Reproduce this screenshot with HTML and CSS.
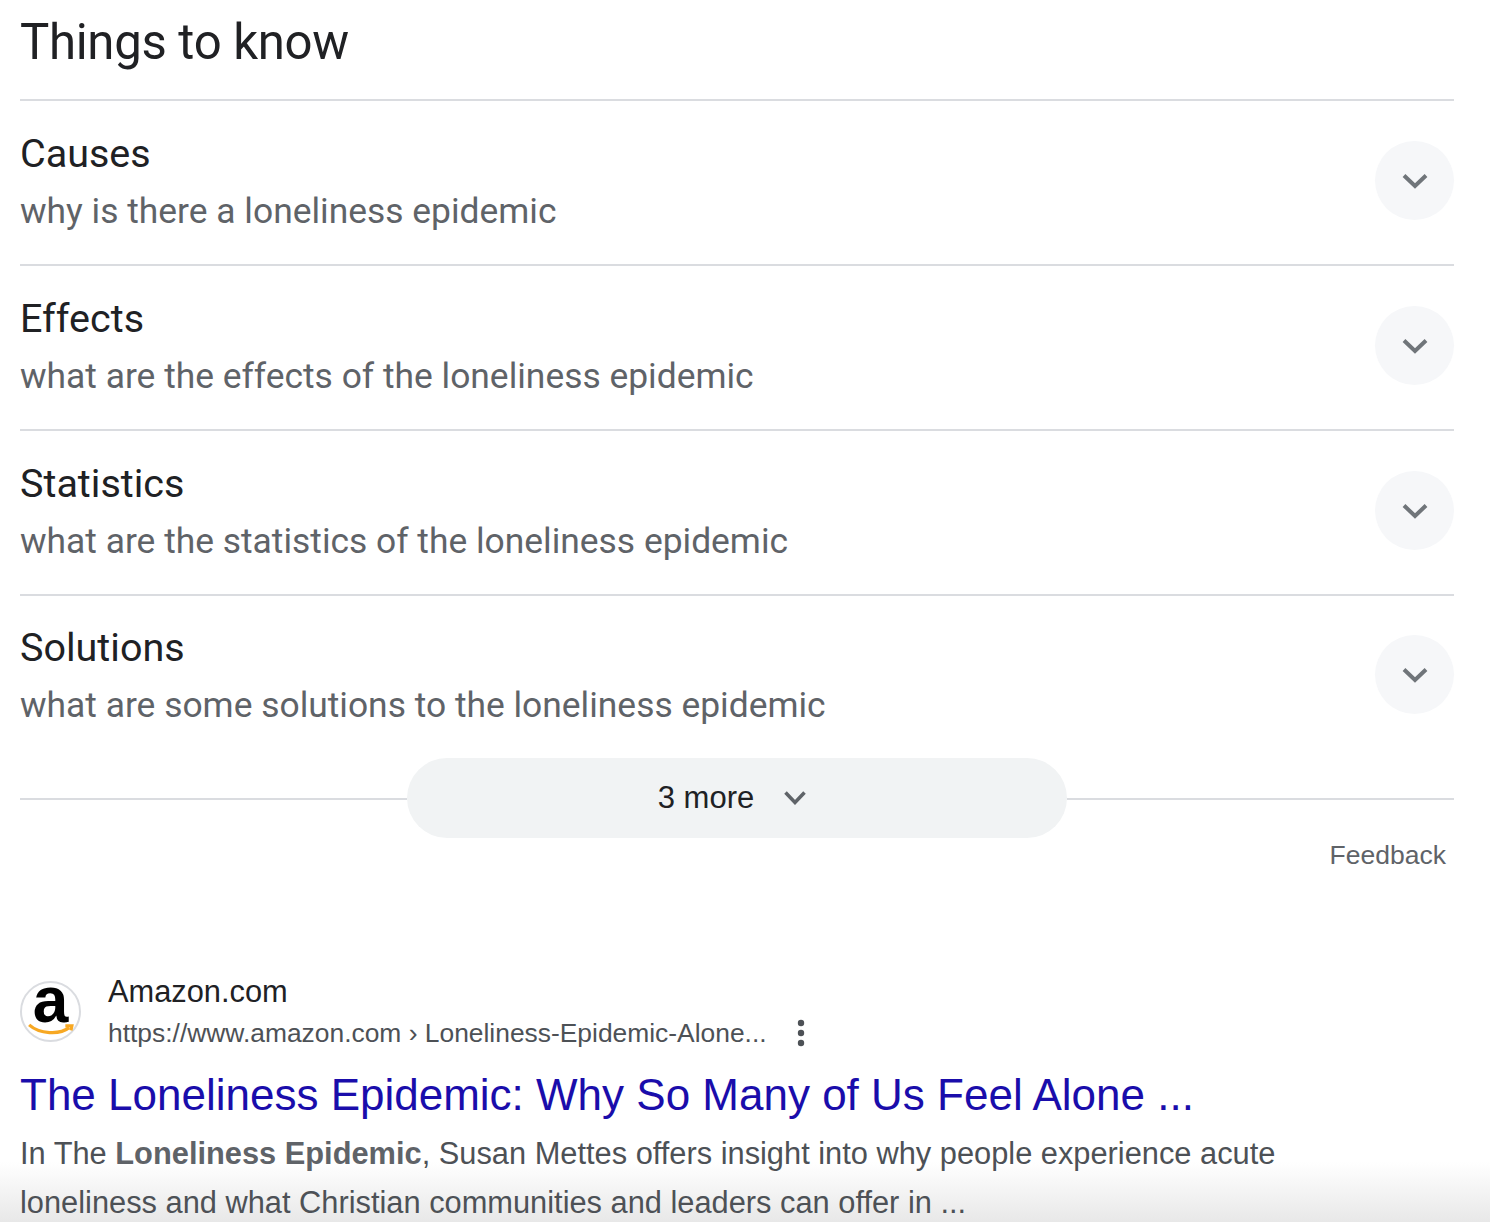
FILE: index.html
```html
<!DOCTYPE html>
<html lang="en">
<head>
<meta charset="utf-8">
<title>Things to know</title>
<link rel="stylesheet" href="styles.css">
</head>
<body>
<div class="fade"></div>
<main class="page">
  <h2 class="heading">Things to know</h2>
  <section class="list">
    <div class="row">
      <div class="row-text"><div class="row-title">Causes</div><div class="row-sub">why is there a loneliness epidemic</div></div>
      <button class="circle"><svg class="chev" viewBox="0 0 26 16"><path d="M2 2.500 13 13 24 2.500"/></svg></button>
    </div>
    <div class="row">
      <div class="row-text"><div class="row-title">Effects</div><div class="row-sub">what are the effects of the loneliness epidemic</div></div>
      <button class="circle"><svg class="chev" viewBox="0 0 26 16"><path d="M2 2.500 13 13 24 2.500"/></svg></button>
    </div>
    <div class="row">
      <div class="row-text"><div class="row-title">Statistics</div><div class="row-sub">what are the statistics of the loneliness epidemic</div></div>
      <button class="circle"><svg class="chev" viewBox="0 0 26 16"><path d="M2 2.500 13 13 24 2.500"/></svg></button>
    </div>
    <div class="row">
      <div class="row-text"><div class="row-title">Solutions</div><div class="row-sub">what are some solutions to the loneliness epidemic</div></div>
      <button class="circle"><svg class="chev" viewBox="0 0 26 16"><path d="M2 2.500 13 13 24 2.500"/></svg></button>
    </div>
  </section>
  <div class="more">
    <span class="more-line"></span>
    <button class="more-pill"><span>3 more</span><svg class="more-chev" viewBox="0 0 22 14"><path d="M1.500 1.500 11 11.500 20.500 1.500"/></svg></button>
    <span class="more-line"></span>
  </div>
  <div class="feedback">Feedback</div>
  <article class="result">
    <div class="source">
      <div class="favicon">
        <span class="favicon-a">a</span>
        <svg class="favicon-smile" viewBox="0 0 48 14"><path d="M1 2C12 12 34 13 44 5"/><path class="tip" d="M40 3 47 3 46 8"/></svg>
      </div>
      <div class="source-text">
        <div class="site">Amazon.com</div>
        <div class="url-row"><span class="url">https://www.amazon.com › Loneliness-Epidemic-Alone...</span>
          <svg class="dots" viewBox="0 0 10 28"><circle cx="5" cy="4" r="3.200"/><circle cx="5" cy="14" r="3.200"/><circle cx="5" cy="24" r="3.200"/></svg>
        </div>
      </div>
    </div>
    <h3 class="title">The Loneliness Epidemic: Why So Many of Us Feel Alone ...</h3>
    <p class="snippet">In The <b>Loneliness Epidemic</b>, Susan Mettes offers insight into why people experience acute loneliness and what Christian communities and leaders can offer in ...</p>
  </article>
</main>
</body>
</html>
```
FILE: styles.css
```css
* { box-sizing: border-box; }
html, body { margin: 0; height: 1222px; overflow: hidden; background: #fff; }
body { position: relative; font-family: "Liberation Sans", Arial, sans-serif; color: #202124; }
.page { position: relative; padding: 0 36px 0 20px; }
.heading { margin: 0; height: 99px; padding-top: 11px; font: 400 49.1px/62px Roboto, sans-serif; color: #202124; letter-spacing: -0.3px; }
.row { height: 165px; border-top: 2px solid #dadce0; display: flex; justify-content: space-between; align-items: center; padding-bottom: 4px; }
.row:last-child { height: 164px; padding-bottom: 5px; }
.row-text { display: flex; flex-direction: column; margin-top: 3px; }
.row-title { font: 400 39.5px/52px Roboto, sans-serif; color: #202124; }
.row-sub { font: 400 35.4px/50px Roboto, sans-serif; color: #5f6368; margin-top: 6px; }
.circle { width: 79px; height: 79px; border: 0; border-radius: 50%; background: #f6f7f9; display: flex; align-items: center; justify-content: center; padding: 0; }
.chev { width: 26px; height: 16px; fill: none; stroke: #70757a; stroke-width: 4; }
.more { display: flex; align-items: center; height: 80px; }
.more-line { flex: 1; height: 2px; margin-top: 2px; background: #dadce0; }
.more-pill { width: 660px; height: 80px; border: 0; border-radius: 40px; background: #f1f3f4; display: flex; align-items: center; justify-content: center; gap: 30px; font: 400 31px/40px "Liberation Sans", sans-serif; color: #202124; padding: 0 10px 0 0; }
.more-chev { width: 22px; height: 14px; fill: none; stroke: #5f6368; stroke-width: 3.500; }
.feedback { text-align: right; padding-right: 8px; font: 400 26.5px/34px "Liberation Sans", sans-serif; color: #5f6368; }
.result { margin-top: 104px; }
.source { display: flex; align-items: flex-start; gap: 26px; height: 91px; }
.favicon { position: relative; width: 61px; height: 61px; border-radius: 50%; border: 2px solid #dadce0; background: #fff; margin: 5px 1px 0 0; flex: none; }
.favicon-a { display: block; text-align: center; margin-top: -15px; font: 700 64px/64px "Liberation Sans", sans-serif; color: #000; filter: blur(.5px); }
.favicon-smile { position: absolute; left: 5px; top: 40px; width: 47px; height: 13px; fill: none; stroke: #f7a823; stroke-width: 3.500; }
.source-text { margin-top: -5px; }
.site { font: 400 30.8px/42px "Liberation Sans", sans-serif; color: #202124; }
.url-row { display: flex; align-items: center; gap: 29px; height: 40px; }
.url { font: 400 26.4px/36px "Liberation Sans", sans-serif; color: #4d5156; }
.dots { width: 10px; height: 28px; fill: #4d5156; }
.title { margin: 0; font: 400 44px/56px "Liberation Sans", sans-serif; color: #1a0dab; }
.snippet { margin: 6px 0 0; width: 1290px; font: 400 30.8px/49px "Liberation Sans", sans-serif; color: #4d5156; }
.snippet b { font-weight: 700; color: #5f6368; }
.fade { position: absolute; left: 0; right: 0; bottom: 0; height: 60px; background: linear-gradient(to bottom, rgba(232,232,232,0), rgba(232,232,232,1)); }
```
